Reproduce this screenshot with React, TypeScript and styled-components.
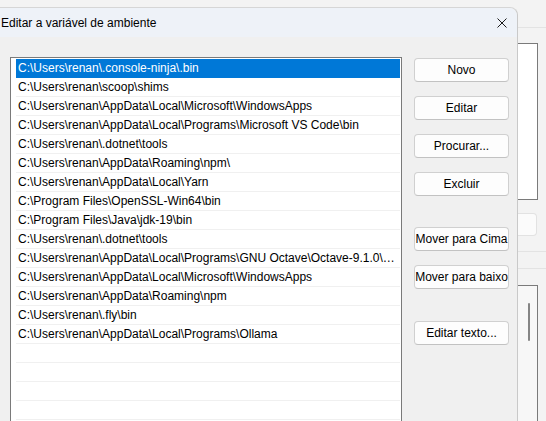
import React from "react";
import styled, { createGlobalStyle } from "styled-components";

// entries of the PATH variable, as shown in the list
const paths: string[] = [
	"C:\\Users\\renan\\.console-ninja\\.bin",
	"C:\\Users\\renan\\scoop\\shims",
	"C:\\Users\\renan\\AppData\\Local\\Microsoft\\WindowsApps",
	"C:\\Users\\renan\\AppData\\Local\\Programs\\Microsoft VS Code\\bin",
	"C:\\Users\\renan\\.dotnet\\tools",
	"C:\\Users\\renan\\AppData\\Roaming\\npm\\",
	"C:\\Users\\renan\\AppData\\Local\\Yarn",
	"C:\\Program Files\\OpenSSL-Win64\\bin",
	"C:\\Program Files\\Java\\jdk-19\\bin",
	"C:\\Users\\renan\\.dotnet\\tools",
	"C:\\Users\\renan\\AppData\\Local\\Programs\\GNU Octave\\Octave-9.1.0\\Application\\bin",
	"C:\\Users\\renan\\AppData\\Local\\Microsoft\\WindowsApps",
	"C:\\Users\\renan\\AppData\\Roaming\\npm",
	"C:\\Users\\renan\\.fly\\bin",
	"C:\\Users\\renan\\AppData\\Local\\Programs\\Ollama",
];

const buttons = [
	{ label: "Novo", gap: 0 },
	{ label: "Editar", gap: 14 },
	{ label: "Procurar...", gap: 14 },
	{ label: "Excluir", gap: 14 },
	{ label: "Mover para Cima", gap: 31 },
	{ label: "Mover para baixo", gap: 14 },
	{ label: "Editar texto...", gap: 32 },
];

const GlobalStyle = createGlobalStyle`
	html, body {
		margin: 0;
		padding: 0;
		background: #f3f3f3;
	}
	body {
		font-family: "Segoe UI", "Liberation Sans", Arial, sans-serif;
		font-size: 12px;
		color: #000;
	}
`;

function App() {
	const selected = 0;
	const rows = [...paths, ...Array(8).fill("")];

	return (
		<Screen>
			<GlobalStyle />
			<Dialog>
				<TitleBar>
					<Title>Editar a variável de ambiente</Title>
					<svg width="10" height="10" viewBox="0 0 10 10">
						<path d="M0.5 0.5 L9.5 9.5 M9.5 0.5 L0.5 9.5" stroke="#1a1a1a" strokeWidth="1" />
					</svg>
				</TitleBar>

				<Body>
					<ListBox>
						{ rows.map((path, i) => (
							<Row key={ i } $selected={ i === selected }>{ path }</Row>
						)) }
					</ListBox>

					<ButtonColumn>
						{ buttons.map((b) => (
							<Button key={ b.label } $gap={ b.gap }>{ b.label }</Button>
						)) }
					</ButtonColumn>
				</Body>
			</Dialog>

			{/* the part of the window behind the dialog */}
			<BackWindow>
				<BackLine $top={ 27 } />
				<BackBox $top={ 15 } $height={ 157 } />
				<BackInput />
				<BackLine $top={ 15 } />
				<BackLine $top={ 16 } />
				<BackScroll>
					<Thumb />
				</BackScroll>
			</BackWindow>
		</Screen>
	);
}

const Screen = styled.div`
	width: 546px;
	height: 421px;
	overflow: hidden;
	display: flex;
	align-items: flex-start;
	background: #f3f3f3;
`;

const Dialog = styled.div`
	flex: none;
	width: 518px;
	height: 460px;
	margin-top: 7px;
	display: flex;
	flex-direction: column;
	box-sizing: border-box;
	background: #f0f0f0;
	border-top: 1px solid #d6d6d6;
	border-right: 1px solid #c9c9c9;
	border-top-right-radius: 8px;
`;

const TitleBar = styled.div`
	flex: none;
	height: 29px;
	display: flex;
	align-items: center;
	justify-content: space-between;
	padding: 0 10px 0 1px;
	background: #eef2f8;
	border-top-right-radius: 8px;
`;

const Title = styled.span`
	font-size: 12px;
`;

const Body = styled.div`
	flex: none;
	display: flex;
	align-items: flex-start;
	padding: 20px 8px 0 10px;
`;

const ListBox = styled.div`
	flex: none;
	width: 392px;
	height: 400px;
	box-sizing: border-box;
	overflow: hidden;
	background: #fff;
	border: 1px solid #7a7a7a;
	padding: 1px 1px 0 5px;
`;

const Row = styled.div<{ $selected?: boolean }>`
	height: 19px;
	box-sizing: border-box;
	line-height: 19px;
	padding-left: 2px;
	white-space: nowrap;
	overflow: hidden;
	text-overflow: ellipsis;
	border-bottom: 1px solid ${ p => p.$selected ? "#0078d7" : "#f0f0f0" };
	background: ${ p => p.$selected ? "#0078d7" : "transparent" };
	color: ${ p => p.$selected ? "#fff" : "#000" };
`;

const ButtonColumn = styled.div`
	display: flex;
	flex-direction: column;
	margin: 1px 0 0 12px;
`;

const Button = styled.button<{ $gap: number }>`
	flex: none;
	width: 95px;
	height: 24px;
	margin-top: ${ p => p.$gap }px;
	padding: 0;
	font: inherit;
	font-size: 12px;
	color: #000;
	background: #fdfdfd;
	border: 1px solid #d0d0d0;
	border-bottom-color: #c2c2c2;
	border-radius: 4px;
	white-space: nowrap;
`;

const BackWindow = styled.div`
	flex: 1;
	display: flex;
	flex-direction: column;
	align-items: flex-start;
`;

const BackLine = styled.div<{ $top: number }>`
	flex: none;
	align-self: stretch;
	margin-top: ${ p => p.$top }px;
	height: 1px;
	background: #e3e3e3;
`;

const BackBox = styled.div<{ $top: number; $height: number }>`
	flex: none;
	margin-top: ${ p => p.$top }px;
	width: 20px;
	height: ${ p => p.$height }px;
	box-sizing: border-box;
	background: #fff;
	border: 1px solid #7a7a7a;
	border-left: none;
`;

const BackInput = styled.div`
	flex: none;
	margin-top: 13px;
	width: 19px;
	height: 23px;
	box-sizing: border-box;
	background: #fbfbfb;
	border: 1px solid #e2e2e2;
	border-left: none;
	border-radius: 0 4px 4px 0;
`;

const BackScroll = styled.div`
	flex: none;
	margin-top: 16px;
	width: 20px;
	height: 200px;
	box-sizing: border-box;
	background: #f7f7f7;
	border: 1px solid #7a7a7a;
	border-left: none;
	padding: 17px 0 0 10px;
`;

const Thumb = styled.div`
	width: 2px;
	height: 38px;
	border-radius: 1px;
	background: #858585;
`;

export default App;
